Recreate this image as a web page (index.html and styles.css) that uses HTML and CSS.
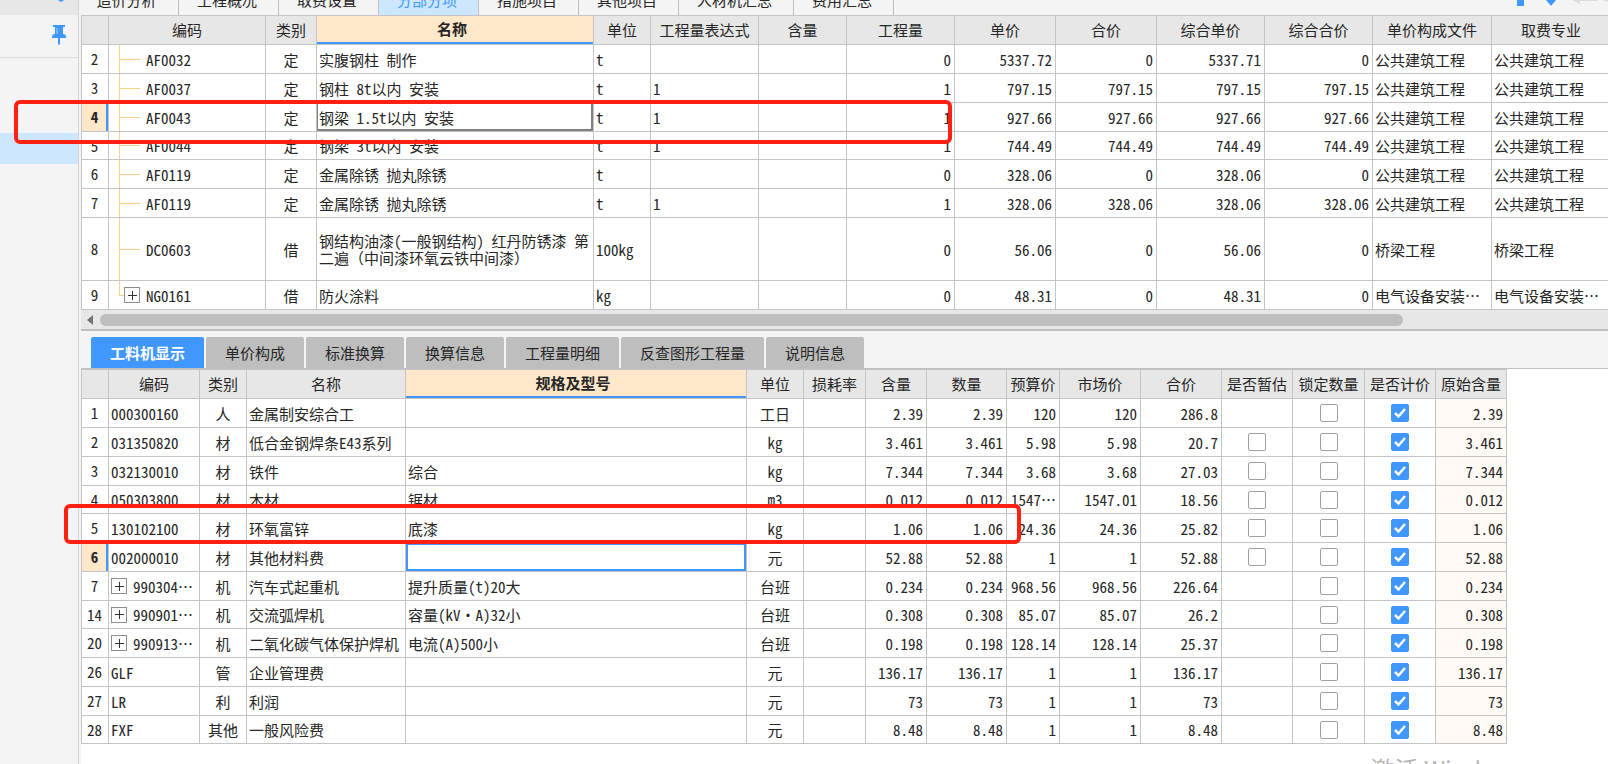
FILE: index.html
```
<!DOCTYPE html>
<html lang="zh-CN">
<head>
<meta charset="utf-8">
<title>分部分项</title>
<link rel="stylesheet" href="styles.css">
</head>
<body>
<aside class="side">
  <div class="side-top"><svg width="8" height="3" viewBox="0 0 8 3"><path d="M1 0h6L4 2z" fill="#4098ff"/></svg></div>
  <div class="side-pin">
    <button class="icon-btn" aria-label="固定"><svg width="16" height="20" viewBox="0 0 16 20"><path d="M2 0h12v2h-2v7c2 0 3 1 3 3v1H9v6l-1 1-1-1v-6H1v-1c0-2 1-3 3-3V2H2z" fill="#4098ff"/><path d="M6 3v6" stroke="#a8d0ff" stroke-width="1"/></svg></button>
  </div>
  <div class="side-list"><div class="side-item"></div></div>
</aside>
<main class="main">
  <nav class="top-tabs">
    <button class="top-tab">造价分析</button>
    <button class="top-tab">工程概况</button>
    <button class="top-tab">取费设置</button>
    <button class="top-tab on">分部分项</button>
    <button class="top-tab">措施项目</button>
    <button class="top-tab">其他项目</button>
    <button class="top-tab wide">人材机汇总</button>
    <button class="top-tab">费用汇总</button>
    <svg class="arrows" width="92" height="8" viewBox="0 0 92 8"><path d="M1 0h7v6H1z" fill="#4098ff"/><path d="M30 0h10l-5 6z" fill="#4098ff"/><path d="M56 0h8v4zM64 0h18v1H64zM86 0h6v2z" fill="#dcdcdc"/></svg>
  </nav>

  <div class="bill-wrap">
  <table class="grid bill">
    <colgroup><col class="w27"><col class="w157"><col class="w51"><col class="w277"><col class="w57"><col class="w108"><col class="w88"><col class="w108"><col class="w101"><col class="w101"><col class="w108"><col class="w108"><col class="w119"><col class="w119"></colgroup>
    <thead><tr><th></th><th>编码</th><th>类别</th><th class="active">名称</th><th>单位</th><th>工程量表达式</th><th>含量</th><th>工程量</th><th>单价</th><th>合价</th><th>综合单价</th><th>综合合价</th><th>单价构成文件</th><th>取费专业</th></tr></thead>
    <tbody>
      <tr><td>2</td><td class="tree">AF0032</td><td>定</td><td>实腹钢柱 制作</td><td>t</td><td></td><td></td><td>0</td><td>5337.72</td><td>0</td><td>5337.71</td><td>0</td><td>公共建筑工程</td><td>公共建筑工程</td></tr>
      <tr><td>3</td><td class="tree">AF0037</td><td>定</td><td>钢柱 8t以内 安装</td><td>t</td><td>1</td><td></td><td>1</td><td>797.15</td><td>797.15</td><td>797.15</td><td>797.15</td><td>公共建筑工程</td><td>公共建筑工程</td></tr>
      <tr class="current"><td>4</td><td class="tree">AF0043</td><td>定</td><td class="picked">钢梁 1.5t以内 安装</td><td>t</td><td>1</td><td></td><td>1</td><td>927.66</td><td>927.66</td><td>927.66</td><td>927.66</td><td>公共建筑工程</td><td>公共建筑工程</td></tr>
      <tr><td>5</td><td class="tree">AF0044</td><td>定</td><td>钢梁 3t以内 安装</td><td>t</td><td>1</td><td></td><td>1</td><td>744.49</td><td>744.49</td><td>744.49</td><td>744.49</td><td>公共建筑工程</td><td>公共建筑工程</td></tr>
      <tr><td>6</td><td class="tree">AF0119</td><td>定</td><td>金属除锈 抛丸除锈</td><td>t</td><td></td><td></td><td>0</td><td>328.06</td><td>0</td><td>328.06</td><td>0</td><td>公共建筑工程</td><td>公共建筑工程</td></tr>
      <tr><td>7</td><td class="tree">AF0119</td><td>定</td><td>金属除锈 抛丸除锈</td><td>t</td><td>1</td><td></td><td>1</td><td>328.06</td><td>328.06</td><td>328.06</td><td>328.06</td><td>公共建筑工程</td><td>公共建筑工程</td></tr>
      <tr class="tall"><td>8</td><td class="tree">DC0603</td><td>借</td><td>钢结构油漆(一般钢结构) 红丹防锈漆 第<br><span class="full">二遍（中间漆环氧云铁中间漆）</span></td><td>100kg</td><td></td><td></td><td>0</td><td>56.06</td><td>0</td><td>56.06</td><td>0</td><td>桥梁工程</td><td>桥梁工程</td></tr>
      <tr><td>9</td><td class="tree last"><span class="node"><button class="plus" aria-label="展开"></button>NG0161</span></td><td>借</td><td>防火涂料</td><td>kg</td><td></td><td></td><td>0</td><td>48.31</td><td>0</td><td>48.31</td><td>0</td><td>电气设备安装…</td><td>电气设备安装…</td></tr>
    </tbody>
  </table>
  </div>
  <div class="scroll"><svg width="7" height="10" viewBox="0 0 7 10"><path d="M6 0v10L0 5z" fill="#6e7176"/></svg><div class="track"><div class="thumb"></div></div></div>

  <nav class="sub-tabs">
    <button class="sub-tab on w113">工料机显示</button>
    <button class="sub-tab">单价构成</button>
    <button class="sub-tab">标准换算</button>
    <button class="sub-tab">换算信息</button>
    <button class="sub-tab w113">工程量明细</button>
    <button class="sub-tab w143">反查图形工程量</button>
    <button class="sub-tab">说明信息</button>
  </nav>

  <table class="grid parts">
    <colgroup><col class="w27"><col class="w91"><col class="w47"><col class="w159"><col class="w341"><col class="w57"><col class="w62"><col class="w61"><col class="w80"><col class="w53"><col class="w81"><col class="w81"><col class="w71"><col class="w72"><col class="w71"><col class="w71"></colgroup>
    <thead><tr><th></th><th>编码</th><th>类别</th><th>名称</th><th class="active">规格及型号</th><th>单位</th><th>损耗率</th><th>含量</th><th>数量</th><th>预算价</th><th>市场价</th><th>合价</th><th>是否暂估</th><th>锁定数量</th><th>是否计价</th><th>原始含量</th></tr></thead>
    <tbody>
      <tr><td>1</td><td>000300160</td><td>人</td><td>金属制安综合工</td><td></td><td>工日</td><td></td><td>2.39</td><td>2.39</td><td>120</td><td>120</td><td>286.8</td><td></td><td><input type="checkbox" aria-label="锁定数量"></td><td><input type="checkbox" aria-label="是否计价" checked></td><td>2.39</td></tr>
      <tr><td>2</td><td>031350820</td><td>材</td><td>低合金钢焊条E43系列</td><td></td><td>kg</td><td></td><td>3.461</td><td>3.461</td><td>5.98</td><td>5.98</td><td>20.7</td><td><input type="checkbox" aria-label="是否暂估"></td><td><input type="checkbox" aria-label="锁定数量"></td><td><input type="checkbox" aria-label="是否计价" checked></td><td>3.461</td></tr>
      <tr><td>3</td><td>032130010</td><td>材</td><td>铁件</td><td>综合</td><td>kg</td><td></td><td>7.344</td><td>7.344</td><td>3.68</td><td>3.68</td><td>27.03</td><td><input type="checkbox" aria-label="是否暂估"></td><td><input type="checkbox" aria-label="锁定数量"></td><td><input type="checkbox" aria-label="是否计价" checked></td><td>7.344</td></tr>
      <tr><td>4</td><td>050303800</td><td>材</td><td>木材</td><td>锯材</td><td>m3</td><td></td><td>0.012</td><td>0.012</td><td>1547…</td><td>1547.01</td><td>18.56</td><td><input type="checkbox" aria-label="是否暂估"></td><td><input type="checkbox" aria-label="锁定数量"></td><td><input type="checkbox" aria-label="是否计价" checked></td><td>0.012</td></tr>
      <tr><td>5</td><td>130102100</td><td>材</td><td>环氧富锌</td><td>底漆</td><td>kg</td><td></td><td>1.06</td><td>1.06</td><td>24.36</td><td>24.36</td><td>25.82</td><td><input type="checkbox" aria-label="是否暂估"></td><td><input type="checkbox" aria-label="锁定数量"></td><td><input type="checkbox" aria-label="是否计价" checked></td><td>1.06</td></tr>
      <tr class="current"><td>6</td><td>002000010</td><td>材</td><td>其他材料费</td><td class="editing"></td><td>元</td><td></td><td>52.88</td><td>52.88</td><td>1</td><td>1</td><td>52.88</td><td><input type="checkbox" aria-label="是否暂估"></td><td><input type="checkbox" aria-label="锁定数量"></td><td><input type="checkbox" aria-label="是否计价" checked></td><td>52.88</td></tr>
      <tr><td>7</td><td><span class="node"><button class="plus" aria-label="展开"></button>990304…</span></td><td>机</td><td>汽车式起重机</td><td>提升质量(t)20大</td><td>台班</td><td></td><td>0.234</td><td>0.234</td><td>968.56</td><td>968.56</td><td>226.64</td><td></td><td><input type="checkbox" aria-label="锁定数量"></td><td><input type="checkbox" aria-label="是否计价" checked></td><td>0.234</td></tr>
      <tr><td>14</td><td><span class="node"><button class="plus" aria-label="展开"></button>990901…</span></td><td>机</td><td>交流弧焊机</td><td>容量(kV・A)32小</td><td>台班</td><td></td><td>0.308</td><td>0.308</td><td>85.07</td><td>85.07</td><td>26.2</td><td></td><td><input type="checkbox" aria-label="锁定数量"></td><td><input type="checkbox" aria-label="是否计价" checked></td><td>0.308</td></tr>
      <tr><td>20</td><td><span class="node"><button class="plus" aria-label="展开"></button>990913…</span></td><td>机</td><td>二氧化碳气体保护焊机</td><td>电流(A)500小</td><td>台班</td><td></td><td>0.198</td><td>0.198</td><td>128.14</td><td>128.14</td><td>25.37</td><td></td><td><input type="checkbox" aria-label="锁定数量"></td><td><input type="checkbox" aria-label="是否计价" checked></td><td>0.198</td></tr>
      <tr><td>26</td><td>GLF</td><td>管</td><td>企业管理费</td><td></td><td>元</td><td></td><td>136.17</td><td>136.17</td><td>1</td><td>1</td><td>136.17</td><td></td><td><input type="checkbox" aria-label="锁定数量"></td><td><input type="checkbox" aria-label="是否计价" checked></td><td>136.17</td></tr>
      <tr><td>27</td><td>LR</td><td>利</td><td>利润</td><td></td><td>元</td><td></td><td>73</td><td>73</td><td>1</td><td>1</td><td>73</td><td></td><td><input type="checkbox" aria-label="锁定数量"></td><td><input type="checkbox" aria-label="是否计价" checked></td><td>73</td></tr>
      <tr><td>28</td><td>FXF</td><td>其他</td><td>一般风险费</td><td></td><td>元</td><td></td><td>8.48</td><td>8.48</td><td>1</td><td>1</td><td>8.48</td><td></td><td><input type="checkbox" aria-label="锁定数量"></td><td><input type="checkbox" aria-label="是否计价" checked></td><td>8.48</td></tr>
    </tbody>
  </table>
</main>
<div class="mark mark-bill"></div>
<div class="mark mark-parts"></div>
<div class="watermark">激活 Windows</div>
</body>
</html>
```
FILE: styles.css
```
* { box-sizing: border-box; }

body {
  position: relative;
  display: flex;
  gap: 2px;
  height: 100vh;
  margin: 0;
  overflow: hidden;
  background: #f4f4f4;
  color: #262626;
  font: 15px/18px "Noto Sans CJK SC", sans-serif;
}

button {
  margin: 0;
  padding: 0;
  border: 0;
  background: none;
  color: inherit;
  font: inherit;
  white-space: nowrap;
}

svg { display: block; }

/* left rail */
.side {
  flex: none;
  width: 79px;
  border-right: 1px solid #d4d4d4;
}
.side-top {
  display: flex;
  justify-content: flex-end;
  height: 15px;
  padding-right: 13px;
  background: #e7e7e7;
}
.side-pin {
  display: flex;
  justify-content: flex-end;
  height: 43px;
  padding: 10px 11px 0 0;
  border-bottom: 1px solid #dcdcdc;
}
.icon-btn { height: 20px; }
.side-list { padding-top: 75px; }
.side-item { height: 31px; background: #cce7ff; }

.main {
  flex: 1;
  min-width: 0;
  background: #fff;
}

/* module tabs */
.top-tabs {
  display: flex;
  align-items: flex-end;
  height: 15px;
  overflow: hidden;
  background: #f4f4f4;
}
.top-tab {
  flex: none;
  width: 100px;
  height: 30px;
  padding-right: 3px;
  border-right: 1px solid #c0c0c0;
}
.top-tab:first-child { width: 98px; padding-right: 6px; }
.top-tab.wide { width: 115px; }
.top-tab.on { background: #cce7ff; color: #4098ff; }
.arrows { align-self: flex-start; margin-left: auto; }

/* data grids */
.bill-wrap { overflow: hidden; }
.grid {
  border-collapse: collapse;
  table-layout: fixed;
  width: 1px;
  font-feature-settings: "hwid";
}
.grid th,
.grid td {
  height: 29px;
  padding: 0 3px;
  overflow: hidden;
  border: 1px solid #c4c4c4;
  background-color: #fff;
  line-height: 17px;
  white-space: nowrap;
}
.grid th {
  padding: 0 0 2px;
  background-color: #e7e7e7;
  font-weight: 400;
  text-align: center;
}
.grid th.active {
  padding: 0 6px 3px 0;
  background-color: #ffe7ca;
  box-shadow: inset 0 -2px #4098ff;
  font-weight: 700;
}
.grid td { text-align: right; }
.grid tbody tr:nth-child(4n) td { height: 28px; }
.bill tbody tr:last-child td { height: 29px; }
.grid tbody tr.tall td { height: 63px; }
.grid td:nth-child(1),
.grid td:nth-child(3) { padding: 0; text-align: center; }
.grid td:nth-child(1) { padding-right: 1px; padding-bottom: 1px; }
.grid td:nth-child(2),
.grid td:nth-child(4),
.grid td:nth-child(5) { padding-left: 2px; text-align: left; }
.bill td:nth-child(6),
.bill td:nth-child(13),
.bill td:nth-child(14) { padding-left: 2px; text-align: left; }
.parts td:nth-child(n+13):nth-child(-n+15),
.parts td:nth-child(6) { text-align: center; }
.parts td:nth-child(16) { background-color: #fffaf5; }
.grid .current td:first-child {
  background-color: #ffe7ca;
  box-shadow: inset -2px 0 #4098ff;
  font-weight: 700;
}
.grid .picked { box-shadow: inset 0 0 0 1px #808080, inset -2px -2px #808080; }
.grid .editing { box-shadow: inset 0 0 0 2px #4098ff; }
.full { font-feature-settings: normal; }

.bill td.tree {
  padding-left: 37px;
  background-image: linear-gradient(#ffd08a, #ffd08a), linear-gradient(#ffd08a, #ffd08a);
  background-position: 10px 0, 10px 50%;
  background-repeat: no-repeat;
  background-size: 1px 100%, 21px 1px;
}
.bill td.tree.last {
  padding-left: 15px;
  background-size: 1px 50%, 5px 1px;
}
.node { display: flex; align-items: center; gap: 6px; }
.plus {
  flex: none;
  width: 16px;
  height: 16px;
  border: 1px solid #8c8c8c;
  background:
    linear-gradient(#333, #333) center / 9px 1px no-repeat,
    linear-gradient(#333, #333) center / 1px 9px no-repeat;
}

input[type="checkbox"] {
  display: block;
  width: 18px;
  height: 18px;
  margin: 0 auto;
  appearance: none;
  border: 1px solid #a0a0a0;
  border-radius: 2px;
  background: #fff;
}
input[type="checkbox"]:checked {
  border-color: #4098ff;
  background: #4098ff url("data:image/svg+xml,%3Csvg xmlns='http://www.w3.org/2000/svg' viewBox='0 0 16 16'%3E%3Cpath d='M3 8l3.500 3.500L13 4' fill='none' stroke='white' stroke-width='2.500'/%3E%3C/svg%3E") center / 16px 16px no-repeat;
}

.w27 { width: 27px; }
.w47 { width: 47px; }
.w51 { width: 51px; }
.w53 { width: 53px; }
.w57 { width: 57px; }
.w61 { width: 61px; }
.w62 { width: 62px; }
.w71 { width: 71px; }
.w72 { width: 72px; }
.w80 { width: 80px; }
.w81 { width: 81px; }
.w88 { width: 88px; }
.w91 { width: 91px; }
.w101 { width: 101px; }
.w108 { width: 108px; }
.w119 { width: 119px; }
.w157 { width: 157px; }
.w159 { width: 159px; }
.w277 { width: 277px; }
.w341 { width: 341px; }

/* horizontal scroll bar */
.scroll {
  display: flex;
  align-items: center;
  gap: 6px;
  height: 21px;
  padding-left: 6px;
  border-bottom: 2px solid #c0c0c0;
  background: #e7e7e7;
}
.track { flex: 1; }
.thumb {
  width: 86.4%;
  height: 12px;
  border-radius: 6px;
  background: #bebebe;
}

/* detail tabs */
.sub-tabs {
  display: flex;
  align-items: flex-end;
  gap: 2px;
  height: 38px;
  padding-left: 10px;
  border-bottom: 1px solid #c0c0c0;
  background: #f4f4f4;
}
.sub-tab {
  width: 98px;
  height: 31px;
  border-radius: 2px 2px 0 0;
  background: #bebebe;
}
.sub-tab.w113 { width: 113px; }
.sub-tab.w143 { width: 143px; }
.sub-tab.on { background: #4098ff; color: #fff; font-weight: 700; }

/* red call-outs laid over the grids */
.mark {
  position: absolute;
  border: 4px solid #ff2012;
  border-radius: 6px;
}
.mark-bill { left: 14px; top: 100px; width: 938px; height: 44px; }
.mark-parts { left: 64px; top: 504px; width: 957px; height: 40px; }

.watermark {
  position: absolute;
  right: 82px;
  bottom: -17px;
  color: #b4b4b4;
  font-size: 24px;
  line-height: 24px;
}
```
